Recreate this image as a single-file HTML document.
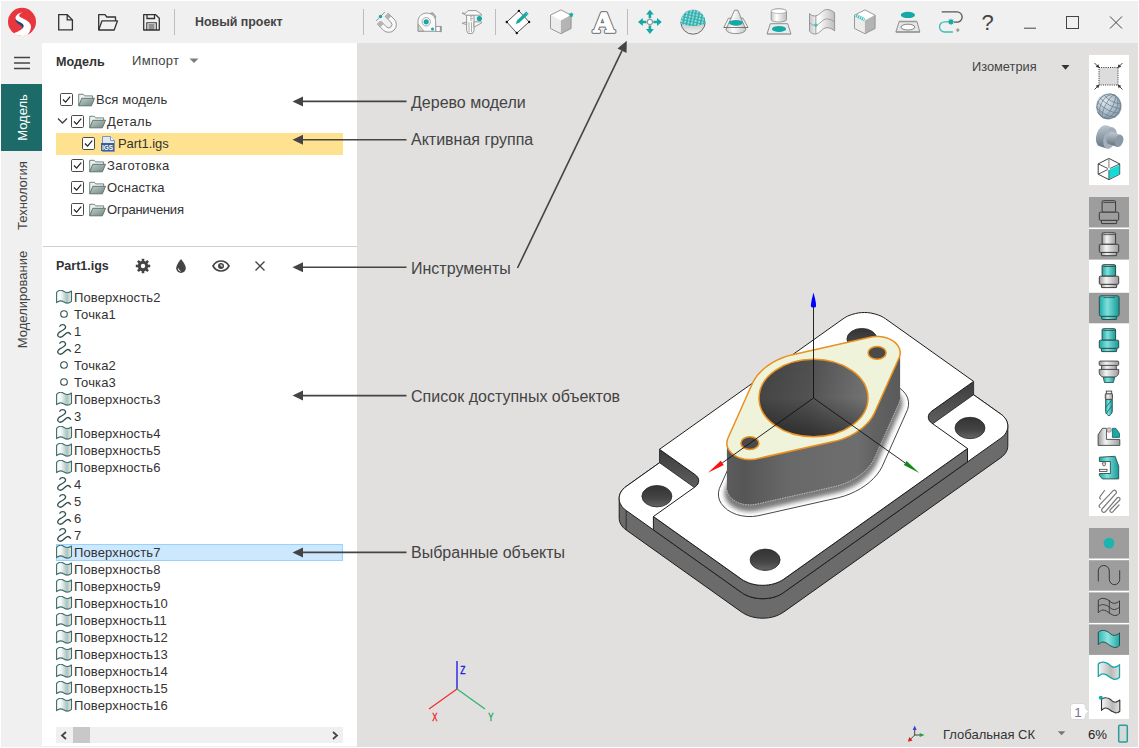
<!DOCTYPE html>
<html lang="ru"><head><meta charset="utf-8"><title>Новый проект</title>
<style>
html,body{margin:0;padding:0}
body{width:1139px;height:748px;overflow:hidden;background:#f0f0f0;position:relative;font-family:"Liberation Sans",sans-serif;font-size:13px;color:#333}
.abs{position:absolute}
#frame{left:0;top:0;width:1137px;height:746px;border:1px solid #fff;z-index:50;pointer-events:none}
#titlebar{left:0;top:0;width:1139px;height:43px;background:#f0f0f0}
#leftstrip{left:0;top:43px;width:42px;height:705px;background:#f0f0f0}
#panel{left:42px;top:43px;width:315px;height:703px;background:#fff}
#viewport{left:357px;top:43px;width:782px;height:705px;background:#e1e0df}
.vtab{position:absolute;left:2px;width:41px;display:flex;align-items:center;justify-content:center}
.vtab span{display:block;transform:rotate(-90deg);white-space:nowrap;font-size:13px;color:#444}
.title{left:195px;top:14px;font-weight:bold;font-size:13px;color:#444}
.sep{position:absolute;top:8px;width:1px;height:26px;background:#c4c4c4}
.trow{position:absolute;left:56px;width:287px;height:22px}
.trow .t{position:absolute;top:3px;font-size:13px;color:#333;white-space:nowrap}
.cb{position:absolute;top:5px;width:10px;height:10px;border:1px solid #444;background:#fff}
.lrow{position:absolute;left:56px;width:287px;height:17px}
.lrow .t{position:absolute;left:18px;top:1px;font-size:13px;color:#333;white-space:nowrap;letter-spacing:0.13px}
.ann{position:absolute;font-size:16px;color:#444;white-space:nowrap}
</style></head><body>
<div id="titlebar" class="abs"></div>
<div id="leftstrip" class="abs"></div>
<div id="panel" class="abs"></div>
<div id="viewport" class="abs"></div>
<!--TITLE-->
<svg class="abs" style="left:0;top:0" width="1139" height="43" viewBox="0 0 1139 43" font-family="Liberation Sans, sans-serif">
<defs>
<linearGradient id="gv" x1="0" y1="0" x2="1" y2="0"><stop offset="0" stop-color="#c8c8c8"/><stop offset="0.35" stop-color="#fff"/><stop offset="1" stop-color="#bdbdbd"/></linearGradient>
<linearGradient id="gh" x1="0" y1="0" x2="0" y2="1"><stop offset="0" stop-color="#bbb"/><stop offset="0.55" stop-color="#c8c8c8"/><stop offset="1" stop-color="#f2f2f2"/></linearGradient>
<pattern id="mesh" width="3.400" height="3" patternUnits="userSpaceOnUse" patternTransform="rotate(12)"><rect width="3.400" height="3" fill="#2bb0ad"/><path d="M0.300 2.600L1.500 0.500L2.700 2.600z" fill="#dff6f5"/></pattern>
</defs>
<g transform="translate(8,7.800)"><circle cx="14" cy="14" r="14" fill="#e8363f"/><path d="M15.100 4.400C12.500 4.600 7.500 6.500 7.500 10.300c0.300 3 4 4.200 6 5.400 1.500 1 2.200 1.800 1.800 3.300-0.200 0.800-0.600 1.500-1 2C11.500 23.200 8.500 24.500 5.500 25.400A14.900 14.900 0 0 0 19.300 27.300C21.500 24.500 23.600 21 22.800 17.700 22 14.500 18.500 12.600 15.900 11.300 13.500 10.100 11 9 11.100 7.800 11.200 6.200 13.500 4.900 15.100 4.400z" fill="#fff"/><path d="M7.300 11c0 3.200 2.500 4.800 5 6.200 1.500 0.900 2.300 2 2 3.800 0.700-0.800 1.200-1.700 1.300-2.700 0.200-1.700-1.300-2.700-3-3.600C10.500 13.600 8 12.800 7.300 11z" fill="#0b4f86"/></g>
<path d="M58.700 14.700h8.500l5.200 5.200v10h-13.700z" fill="none" stroke="#333" stroke-width="1.300" stroke-linejoin="miter"/><path d="M67.200 14.700v5.200h5.200" fill="none" stroke="#333" stroke-width="1.300"/>
<path d="M98.700 30V14.700h6.300l1.800 2.300h8.700v3.800" fill="none" stroke="#333" stroke-width="1.300" stroke-linejoin="round"/><path d="M98.700 30l3.300-9.200h15.500l-3.300 9.200z" fill="none" stroke="#333" stroke-width="1.300" stroke-linejoin="round"/>
<path d="M143.700 14.700h12l3.600 3.600v11.700h-15.600z" fill="none" stroke="#333" stroke-width="1.300" stroke-linejoin="round"/><path d="M147 14.700v3.800h7.500v-3.800" fill="none" stroke="#333" stroke-width="1.300"/><path d="M146.800 30v-7.300h9.500v7.300M148.500 25h6M148.500 27h6M148.500 29h6" fill="none" stroke="#333" stroke-width="1.100"/>
<rect x="174.0" y="9" width="1" height="26" fill="#bdbdbd"/>
<rect x="363.0" y="9" width="1" height="26" fill="#bdbdbd"/>
<rect x="495.0" y="9" width="1" height="26" fill="#bdbdbd"/>
<rect x="627.0" y="9" width="1" height="26" fill="#bdbdbd"/>
<text x="195" y="26" font-size="12.400" font-weight="bold" fill="#444">Новый проект</text>
<g transform="translate(388.500,24.400) rotate(-45)"><path d="M-7.700-8V0.300a7.700 7.700 0 0 0 15.400 0V-8H3.200V0.300a3.200 3.200 0 0 1-6.400 0V-8z" fill="#f8f8f8" stroke="#8f8f8f" stroke-width="0.900"/><rect x="-7.700" y="-8" width="4.500" height="4.200" fill="#b4b4b4"/><rect x="3.200" y="-8" width="4.500" height="4.200" fill="#b4b4b4"/></g>
<path d="M376 20.900L384.900 12" stroke="#777" stroke-width="0.800"/><circle cx="380.500" cy="16.500" r="1.700" fill="#14a9a6"/>
<path d="M435.700 26.400h5.500v5h-5.500z" fill="#fff" stroke="#8f8f8f" stroke-width="0.900"/><rect x="439.800" y="26" width="1.700" height="6.200" fill="#999"/>
<path d="M430.500 13.200l2.200-0.600 3 3.600-0.300 2.200z" fill="#b4b4b4" stroke="#8f8f8f" stroke-width="0.800"/>
<path d="M418 31.300V21.500c0-5 4-8.400 8.500-8.400 5.500 0 9.200 3.500 9.200 8.400v9.800z" fill="#f9f9f9" stroke="#8f8f8f" stroke-width="0.900" stroke-linejoin="round"/>
<path d="M418.300 24.300l5.500 6.800h-5.500z" fill="#d8d8d8" stroke="#8f8f8f" stroke-width="0.700"/>
<circle cx="426.200" cy="21.800" r="4.200" fill="#fff" stroke="#8f8f8f" stroke-width="0.800"/><circle cx="426.200" cy="21.800" r="2.600" fill="#14a9a6"/><circle cx="432.500" cy="29" r="1.500" fill="#14a9a6"/>
<path d="M466.600 15V30.600L468 33.400H472.600L474 30.600V15z" fill="#f9f9f9" stroke="#8f8f8f" stroke-width="0.900" stroke-linejoin="round"/>
<path d="M462 12.900L465.500 13.400L468 10.600H476.100L481.300 14.100L481.700 15.200H465.800z" fill="#fafafa" stroke="#8f8f8f" stroke-width="0.900" stroke-linejoin="round"/>
<path d="M462 23.300L466.600 21.800V24.600z" fill="#e4e4e4" stroke="#8f8f8f" stroke-width="0.800" stroke-linejoin="round"/>
<path d="M474 21.800H481.300L481.700 22.900L475.400 26.400L474 27.200z" fill="#f4f4f4" stroke="#8f8f8f" stroke-width="0.900" stroke-linejoin="round"/>
<path d="M469 22.200V32M471.500 22.200V32M470 16.700h2.200M470 18.400h3M470 20.100h2.200" fill="none" stroke="#8f8f8f" stroke-width="0.700"/>
<circle cx="479.400" cy="18.500" r="2.600" fill="#14a9a6"/>
<path d="M518.900 10.900L529.100 22 516.800 33 506.800 22z" fill="#fff" stroke="#444" stroke-width="0.900"/>
<circle cx="518.9" cy="10.9" r="1.200" fill="#111"/>
<circle cx="529.1" cy="22.0" r="1.200" fill="#111"/>
<circle cx="516.8" cy="33.0" r="1.200" fill="#111"/>
<circle cx="506.8" cy="22.0" r="1.200" fill="#111"/>
<path d="M526.300 11.600l2.300 2.400-9.300 8.700-3.600 1.400 1.300-3.700z" fill="#14a9a6"/><path d="M525.400 12.500l2.300 2.400" stroke="#7fd6d3" stroke-width="0.700"/>
<path d="M560.9 9.9L571.1 15.1L560.9 20.5L550.5 15.1z" fill="#fff"/><path d="M550.5 15.1L560.9 20.5L560.9 33.7L550.5 28.5z" fill="#ececec"/><path d="M571.1 15.1L560.9 20.5L560.9 33.7L571.1 28.5z" fill="#b4b4b4"/><path d="M560.9 9.9L571.1 15.1L571.1 28.5L560.9 33.7L550.5 28.5L550.5 15.1z" fill="none" stroke="#8f8f8f" stroke-width="0.900" stroke-linejoin="round"/>
<path d="M571.20 12.10L571.77 13.43L573.11 12.89L572.57 14.23L573.90 14.80L572.57 15.37L573.11 16.71L571.77 16.17L571.20 17.50L570.63 16.17L569.29 16.71L569.83 15.37L568.50 14.80L569.83 14.23L569.29 12.89L570.63 13.43z" fill="#14a9a6"/>
<g font-family="Liberation Serif, serif" font-weight="bold" font-size="30" text-anchor="middle" stroke-linejoin="round"><text x="603.900" y="32" fill="#666" stroke="#666" stroke-width="3.600">A</text><text x="603.900" y="32" fill="#fff" stroke="#fff" stroke-width="1.700">A</text></g>
<g fill="#14a9a6"><path d="M649.9 9.700l3.900 4.800h-2.600v3.700h-2.600v-3.700h-2.600z"/><path d="M649.9 33.900l3.900-4.800h-2.600v-3.700h-2.600v3.700h-2.600z"/><path d="M638 22.0l4.800-3.900v2.600h3.700v2.600h-3.700v2.600z"/><path d="M661.800 22.0l-4.800-3.900v2.600h-3.700v2.600h3.700v2.600z"/></g>
<circle cx="649.9" cy="22.0" r="2.600" fill="#fff" stroke="#999" stroke-width="1.100"/>
<circle cx="693" cy="21.800" r="12.200" fill="url(#gh)"/>
<path d="M680.800 22a12.200 12.200 0 0 0 24.400 0" fill="none" stroke="#5a5a5a" stroke-width="0.900"/>
<path d="M680.600 22.300a12.400 12.400 0 0 1 24.800 0C705.400 24.300 699.800 26 693 26S680.600 24.300 680.600 22.300z" fill="url(#mesh)"/>
<path d="M728.400 18.200h14.600l5 9.300h-24.200z" fill="#f4f4f4" stroke="#777" stroke-width="0.800"/>
<path d="M734.500 10.200h3.300l8 19.200c0 2.300-4.400 4.200-9.900 4.200s-9.900-1.900-9.900-4.200z" fill="url(#gv)" fill-opacity="0.850" stroke="#777" stroke-width="0.800" stroke-linejoin="round"/>
<path d="M723.800 27.500h24.200" stroke="#666" stroke-width="0.800"/>
<ellipse cx="735.900" cy="22.800" rx="7" ry="2.900" fill="#14a9a6"/>
<path d="M770.300 23.700h17.400l3.300 10.300h-24z" fill="#ececec" stroke="#777" stroke-width="0.800"/><path d="M767 34h24" stroke="#aaa" stroke-width="1.300"/>
<ellipse cx="779" cy="28.900" rx="7.100" ry="3" fill="#14a9a6"/>
<path d="M771.200 11.200c0-1.300 3.400-2.300 7.650-2.300s7.650 1 7.650 2.300v8.500c0 1.300-3.400 2.300-7.650 2.300s-7.650-1-7.650-2.300z" fill="url(#gv)" stroke="#888" stroke-width="0.800"/><ellipse cx="778.850" cy="11.200" rx="7.650" ry="2.300" fill="#fff" stroke="#999" stroke-width="0.600"/>
<path d="M809.500 13.500c2.500 2.500 4.300 2.600 6.300 2.300 4-0.600 6.800-6.300 11.100-6.300 3.200 0 5.700 1.500 7.700 3.200v18.200c-2-1.700-4.500-3.200-7.700-3.200-4.300 0-7.100 5.700-11.100 6.300-2 0.300-3.800-0.200-6.300-2.700z" fill="url(#gv)" stroke="#8f8f8f" stroke-width="0.900" stroke-linejoin="round"/>
<path d="M809.500 22.600c2.500 2.500 4.300 2.900 6.300 2.600 4-0.600 6.800-6.300 11.100-6.300 3.200 0 5.700 1.500 7.700 3.200M815.800 15.800v18.200" fill="none" stroke="#8f8f8f" stroke-width="0.800"/>
<path d="M815.800 23l2 2.200-2 2.200-2-2.200z" fill="#3cc4c0"/>
<path d="M864.9 9.9L875.1 15.1L864.9 20.5L854.5 15.1z" fill="#fff"/><path d="M854.5 15.1L864.9 20.5L864.9 33.7L854.5 28.5z" fill="#ececec"/><path d="M875.1 15.1L864.9 20.5L864.9 33.7L875.1 28.5z" fill="#b4b4b4"/><path d="M864.9 9.9L875.1 15.1L875.1 28.5L864.9 33.7L854.5 28.5L854.5 15.1z" fill="none" stroke="#8f8f8f" stroke-width="0.900" stroke-linejoin="round"/>
<path d="M856 15.400l8.600 4.300" stroke="#3cc4c0" stroke-width="3.200" stroke-dasharray="1.400 0.800"/>
<ellipse cx="907.900" cy="14.900" rx="7.100" ry="3.200" fill="#14a9a6"/>
<path d="M899.200 21.500h17.800l2.800 10.500h-23.900z" fill="#e6e6e6" stroke="#777" stroke-width="0.800"/><path d="M895.900 32h23.900M899.200 21.500h17.800" stroke="#999" stroke-width="1.300"/>
<ellipse cx="907.900" cy="27.100" rx="6.900" ry="2.900" fill="#fbfbfb" stroke="#666" stroke-width="0.800"/>
<path d="M941.700 11.900h15.300a5.150 5.150 0 0 1 0 10.300h-3" fill="none" stroke="#555" stroke-width="1.300"/>
<path d="M951 21.800h-6.400a5.100 5.100 0 0 0 0 10.200h8.300" fill="none" stroke="#3cbcb8" stroke-width="1.300"/>
<path d="M951.00 18.20L951.76 19.97L953.55 19.25L952.83 21.04L954.60 21.80L952.83 22.56L953.55 24.35L951.76 23.63L951.00 25.40L950.24 23.63L948.45 24.35L949.17 22.56L947.40 21.80L949.17 21.04L948.45 19.25L950.24 19.97z" fill="#14a9a6"/>
<path d="M957.800 28l1.900 2.100-1.900 2.100-1.900-2.100z" fill="#999"/>
<text x="987.500" y="30" font-size="22" text-anchor="middle" fill="#444">?</text>
<path d="M1024 28.200h12" stroke="#444" stroke-width="1"/>
<rect x="1066.500" y="16.500" width="12" height="12" fill="none" stroke="#444" stroke-width="1"/>
<path d="M1110 16.500l12 12M1122 16.500l-12 12" stroke="#444" stroke-width="1"/>
</svg>
<svg class="abs" style="left:13px;top:56px" width="18" height="14" viewBox="0 0 18 14"><path d="M1 1.500h16M1 7h16M1 12.500h16" stroke="#444" stroke-width="1.600"/></svg>
<!--LEFTSTRIP-->
<div class="abs" style="left:1px;top:84px;width:41px;height:67px;background:#1d6b68"></div><div class="vtab" style="top:84px;height:67px"><span style="color:#fff">Модель</span></div>
<div class="vtab" style="top:150px;height:90px"><span>Технология</span></div>
<div class="vtab" style="top:244px;height:110px"><span>Моделирование</span></div>
<!--PANEL-->
<div class="abs" style="left:56px;top:55px;font-weight:bold;font-size:12.600px;color:#333">Модель</div>
<div class="abs" style="left:132px;top:53px;font-size:13px;letter-spacing:0.300px;color:#444">Импорт</div>
<svg class="abs" style="left:189px;top:58px" width="10" height="6" viewBox="0 0 10 6"><path d="M0.500 0.500h9L5 5z" fill="#7c7c7c"/></svg>
<div class="trow" style="top:89px"><svg class="abs" style="left:4px;top:4px" width="13" height="13" viewBox="0 0 13 13"><rect x="0.500" y="0.500" width="12" height="12" rx="1.200" fill="#fff" stroke="#4a4a4a"/><path d="M3 6.5l2.6 2.7L10.2 3.6" fill="none" stroke="#222" stroke-width="1.2"/></svg><svg class="abs" style="left:21px;top:3px" width="18" height="16" viewBox="0 0 18 16"><defs><linearGradient id="fg1" x1="0" y1="0" x2="1" y2="1"><stop offset="0" stop-color="#c3cecb"/><stop offset="1" stop-color="#708783"/></linearGradient></defs><path d="M1.7 13.8V2.300h4.600l1.300 1.600h8v2.400" fill="#eef2f1" stroke="#6f8582" stroke-width="1"/><path d="M1.700 13.800L4.800 6.300h12.700l-3.100 7.500z" fill="url(#fg1)" stroke="#5f7673" stroke-width="1" stroke-linejoin="round"/></svg><span class="t" style="left:40px;letter-spacing:0.09px">Вся модель</span></div>
<div class="trow" style="top:111px"><svg class="abs" style="left:1px;top:6px" width="11" height="9" viewBox="0 0 11 9"><path d="M1 1.5l4.5 4.5L10 1.5" fill="none" stroke="#444" stroke-width="1.4"/></svg><svg class="abs" style="left:15px;top:4px" width="13" height="13" viewBox="0 0 13 13"><rect x="0.500" y="0.500" width="12" height="12" rx="1.200" fill="#fff" stroke="#4a4a4a"/><path d="M3 6.5l2.6 2.7L10.2 3.6" fill="none" stroke="#222" stroke-width="1.2"/></svg><svg class="abs" style="left:32px;top:3px" width="18" height="16" viewBox="0 0 18 16"><defs><linearGradient id="fg2" x1="0" y1="0" x2="1" y2="1"><stop offset="0" stop-color="#c3cecb"/><stop offset="1" stop-color="#708783"/></linearGradient></defs><path d="M1.7 13.8V2.300h4.600l1.300 1.600h8v2.400" fill="#eef2f1" stroke="#6f8582" stroke-width="1"/><path d="M1.700 13.800L4.800 6.300h12.700l-3.100 7.500z" fill="url(#fg2)" stroke="#5f7673" stroke-width="1" stroke-linejoin="round"/></svg><span class="t" style="left:51px;letter-spacing:0.36px">Деталь</span></div>
<div class="trow" style="top:133px;background:#ffe28f"><svg class="abs" style="left:26px;top:4px" width="13" height="13" viewBox="0 0 13 13"><rect x="0.500" y="0.500" width="12" height="12" rx="1.200" fill="#fff" stroke="#4a4a4a"/><path d="M3 6.5l2.6 2.7L10.2 3.6" fill="none" stroke="#222" stroke-width="1.2"/></svg><svg class="abs" style="left:44px;top:2px" width="17" height="18" viewBox="0 0 17 18"><path d="M2.5 1.5h8l4 4v11h-12z" fill="#dfe8f3" stroke="#7f97b5"/><path d="M10.5 1.5v4h4" fill="#f5f8fc" stroke="#7f97b5"/><rect x="1" y="8" width="13" height="8" fill="#3d5f8f"/><text x="7.5" y="14.6" font-size="6.5" font-weight="bold" fill="#fff" text-anchor="middle" font-family="Liberation Sans, sans-serif">IGS</text></svg><span class="t" style="left:62px;letter-spacing:-0.08px">Part1.igs</span></div>
<div class="trow" style="top:155px"><svg class="abs" style="left:15px;top:4px" width="13" height="13" viewBox="0 0 13 13"><rect x="0.500" y="0.500" width="12" height="12" rx="1.200" fill="#fff" stroke="#4a4a4a"/><path d="M3 6.5l2.6 2.7L10.2 3.6" fill="none" stroke="#222" stroke-width="1.2"/></svg><svg class="abs" style="left:32px;top:3px" width="18" height="16" viewBox="0 0 18 16"><defs><linearGradient id="fg4" x1="0" y1="0" x2="1" y2="1"><stop offset="0" stop-color="#c3cecb"/><stop offset="1" stop-color="#708783"/></linearGradient></defs><path d="M1.7 13.8V2.300h4.600l1.300 1.600h8v2.400" fill="#eef2f1" stroke="#6f8582" stroke-width="1"/><path d="M1.700 13.800L4.800 6.300h12.700l-3.100 7.500z" fill="url(#fg4)" stroke="#5f7673" stroke-width="1" stroke-linejoin="round"/></svg><span class="t" style="left:51px;letter-spacing:0.34px">Заготовка</span></div>
<div class="trow" style="top:177px"><svg class="abs" style="left:15px;top:4px" width="13" height="13" viewBox="0 0 13 13"><rect x="0.500" y="0.500" width="12" height="12" rx="1.200" fill="#fff" stroke="#4a4a4a"/><path d="M3 6.5l2.6 2.7L10.2 3.6" fill="none" stroke="#222" stroke-width="1.2"/></svg><svg class="abs" style="left:32px;top:3px" width="18" height="16" viewBox="0 0 18 16"><defs><linearGradient id="fg5" x1="0" y1="0" x2="1" y2="1"><stop offset="0" stop-color="#c3cecb"/><stop offset="1" stop-color="#708783"/></linearGradient></defs><path d="M1.7 13.8V2.300h4.600l1.300 1.600h8v2.400" fill="#eef2f1" stroke="#6f8582" stroke-width="1"/><path d="M1.700 13.800L4.800 6.300h12.700l-3.100 7.500z" fill="url(#fg5)" stroke="#5f7673" stroke-width="1" stroke-linejoin="round"/></svg><span class="t" style="left:51px;letter-spacing:0.12px">Оснастка</span></div>
<div class="trow" style="top:199px"><svg class="abs" style="left:15px;top:4px" width="13" height="13" viewBox="0 0 13 13"><rect x="0.500" y="0.500" width="12" height="12" rx="1.200" fill="#fff" stroke="#4a4a4a"/><path d="M3 6.5l2.6 2.7L10.2 3.6" fill="none" stroke="#222" stroke-width="1.2"/></svg><svg class="abs" style="left:32px;top:3px" width="18" height="16" viewBox="0 0 18 16"><defs><linearGradient id="fg6" x1="0" y1="0" x2="1" y2="1"><stop offset="0" stop-color="#c3cecb"/><stop offset="1" stop-color="#708783"/></linearGradient></defs><path d="M1.7 13.8V2.300h4.600l1.300 1.600h8v2.400" fill="#eef2f1" stroke="#6f8582" stroke-width="1"/><path d="M1.700 13.800L4.800 6.300h12.700l-3.100 7.500z" fill="url(#fg6)" stroke="#5f7673" stroke-width="1" stroke-linejoin="round"/></svg><span class="t" style="left:51px;letter-spacing:-0.23px">Ограничения</span></div>
<div class="abs" style="left:43px;top:246px;width:314px;height:1px;background:#d0d0d0"></div>
<div class="abs" style="left:56px;top:259px;font-weight:bold;font-size:12.500px;color:#333">Part1.igs</div>
<svg class="abs" style="left:135px;top:258px" width="16" height="16" viewBox="0 0 16 16"><g fill="#444"><circle cx="8" cy="8" r="5.2"/><g id="gt"><rect x="6.7" y="0.8" width="2.6" height="3" /><rect x="6.7" y="12.2" width="2.6" height="3"/></g><use href="#gt" transform="rotate(45 8 8)"/><use href="#gt" transform="rotate(90 8 8)"/><use href="#gt" transform="rotate(135 8 8)"/></g><circle cx="8" cy="8" r="2.2" fill="#fff"/></svg>
<svg class="abs" style="left:175px;top:258px" width="12" height="16" viewBox="0 0 12 16"><path d="M6 1C6 1 1.2 6.8 1.2 10.2a4.8 4.8 0 0 0 9.6 0C10.800 6.800 6 1 6 1z" fill="#444"/><path d="M3.300 10.5a2.800 2.800 0 0 0 2.200 2.700" fill="none" stroke="#fff" stroke-width="1"/></svg>
<svg class="abs" style="left:212px;top:260px" width="18" height="12" viewBox="0 0 18 12"><path d="M1 6C3 2.500 5.800 1 9 1s6 1.500 8 5c-2 3.500-4.800 5-8 5s-6-1.500-8-5z" fill="none" stroke="#444" stroke-width="1.700"/><circle cx="9" cy="6" r="3" fill="#444"/><path d="M9 4.300V6h1.700" stroke="#fff" stroke-width="1" fill="none"/></svg>
<svg class="abs" style="left:254px;top:260px" width="12" height="12" viewBox="0 0 12 12"><path d="M1.500 1.500l9 9M10.500 1.500l-9 9" stroke="#444" stroke-width="1.400"/></svg>
<div class="lrow" style="top:289px"><svg class="abs" style="left:0px;top:1px" width="17" height="15" viewBox="0 0 17 15"><defs><linearGradient id="sg0" x1="0" y1="0" x2="1" y2="0"><stop offset="0" stop-color="#fff"/><stop offset="0.3" stop-color="#f2f6f5"/><stop offset="0.7" stop-color="#a9c2bd"/><stop offset="1" stop-color="#eaf1ef"/></linearGradient></defs><path d="M0.600 2.300C2.500 0.300 5 -0.300 7.500 1.200s5 2.200 8-0.200v10.400C13 13.500 10.500 13.600 8 12S3 10.300 0.600 12.600z" fill="url(#sg0)" stroke="#3d6e69" stroke-width="1.100" stroke-linejoin="round"/></svg><span class="t">Поверхность2</span></div>
<div class="lrow" style="top:306px"><svg class="abs" style="left:3px;top:3px" width="10" height="10" viewBox="0 0 10 10"><circle cx="5" cy="5" r="3.300" fill="#fff" stroke="#2f4f4c" stroke-width="1.100"/></svg><span class="t">Точка1</span></div>
<div class="lrow" style="top:323px"><svg class="abs" style="left:0px;top:1px" width="17" height="15" viewBox="0 0 17 15"><path d="M3.800 2.200C4.800 0.300 8.600 0 9.500 2.500c0.800 2.400-2.300 3.600-4.800 4.900C2.300 8.700 0.800 10.800 2.400 12.400c1.700 1.600 4.300 0.200 6-1.600C10.400 8.600 12.500 7.200 14.600 10.300" fill="none" stroke="#2f4f4c" stroke-width="1.300" stroke-linecap="round"/></svg><span class="t">1</span></div>
<div class="lrow" style="top:340px"><svg class="abs" style="left:0px;top:1px" width="17" height="15" viewBox="0 0 17 15"><path d="M3.800 2.200C4.800 0.300 8.600 0 9.500 2.500c0.800 2.400-2.300 3.600-4.800 4.900C2.300 8.700 0.800 10.800 2.400 12.400c1.700 1.600 4.300 0.200 6-1.600C10.400 8.600 12.500 7.200 14.600 10.300" fill="none" stroke="#2f4f4c" stroke-width="1.300" stroke-linecap="round"/></svg><span class="t">2</span></div>
<div class="lrow" style="top:357px"><svg class="abs" style="left:3px;top:3px" width="10" height="10" viewBox="0 0 10 10"><circle cx="5" cy="5" r="3.300" fill="#fff" stroke="#2f4f4c" stroke-width="1.100"/></svg><span class="t">Точка2</span></div>
<div class="lrow" style="top:374px"><svg class="abs" style="left:3px;top:3px" width="10" height="10" viewBox="0 0 10 10"><circle cx="5" cy="5" r="3.300" fill="#fff" stroke="#2f4f4c" stroke-width="1.100"/></svg><span class="t">Точка3</span></div>
<div class="lrow" style="top:391px"><svg class="abs" style="left:0px;top:1px" width="17" height="15" viewBox="0 0 17 15"><defs><linearGradient id="sg6" x1="0" y1="0" x2="1" y2="0"><stop offset="0" stop-color="#fff"/><stop offset="0.3" stop-color="#f2f6f5"/><stop offset="0.7" stop-color="#a9c2bd"/><stop offset="1" stop-color="#eaf1ef"/></linearGradient></defs><path d="M0.600 2.300C2.500 0.300 5 -0.300 7.500 1.200s5 2.200 8-0.200v10.400C13 13.500 10.500 13.600 8 12S3 10.300 0.600 12.600z" fill="url(#sg6)" stroke="#3d6e69" stroke-width="1.100" stroke-linejoin="round"/></svg><span class="t">Поверхность3</span></div>
<div class="lrow" style="top:408px"><svg class="abs" style="left:0px;top:1px" width="17" height="15" viewBox="0 0 17 15"><path d="M3.800 2.200C4.800 0.300 8.600 0 9.500 2.500c0.800 2.400-2.300 3.600-4.800 4.900C2.300 8.700 0.800 10.800 2.400 12.400c1.700 1.600 4.300 0.200 6-1.600C10.400 8.600 12.500 7.200 14.600 10.300" fill="none" stroke="#2f4f4c" stroke-width="1.300" stroke-linecap="round"/></svg><span class="t">3</span></div>
<div class="lrow" style="top:425px"><svg class="abs" style="left:0px;top:1px" width="17" height="15" viewBox="0 0 17 15"><defs><linearGradient id="sg8" x1="0" y1="0" x2="1" y2="0"><stop offset="0" stop-color="#fff"/><stop offset="0.3" stop-color="#f2f6f5"/><stop offset="0.7" stop-color="#a9c2bd"/><stop offset="1" stop-color="#eaf1ef"/></linearGradient></defs><path d="M0.600 2.300C2.500 0.300 5 -0.300 7.500 1.200s5 2.200 8-0.200v10.400C13 13.500 10.500 13.600 8 12S3 10.300 0.600 12.600z" fill="url(#sg8)" stroke="#3d6e69" stroke-width="1.100" stroke-linejoin="round"/></svg><span class="t">Поверхность4</span></div>
<div class="lrow" style="top:442px"><svg class="abs" style="left:0px;top:1px" width="17" height="15" viewBox="0 0 17 15"><defs><linearGradient id="sg9" x1="0" y1="0" x2="1" y2="0"><stop offset="0" stop-color="#fff"/><stop offset="0.3" stop-color="#f2f6f5"/><stop offset="0.7" stop-color="#a9c2bd"/><stop offset="1" stop-color="#eaf1ef"/></linearGradient></defs><path d="M0.600 2.300C2.500 0.300 5 -0.300 7.500 1.200s5 2.200 8-0.200v10.400C13 13.500 10.500 13.600 8 12S3 10.300 0.600 12.600z" fill="url(#sg9)" stroke="#3d6e69" stroke-width="1.100" stroke-linejoin="round"/></svg><span class="t">Поверхность5</span></div>
<div class="lrow" style="top:459px"><svg class="abs" style="left:0px;top:1px" width="17" height="15" viewBox="0 0 17 15"><defs><linearGradient id="sg10" x1="0" y1="0" x2="1" y2="0"><stop offset="0" stop-color="#fff"/><stop offset="0.3" stop-color="#f2f6f5"/><stop offset="0.7" stop-color="#a9c2bd"/><stop offset="1" stop-color="#eaf1ef"/></linearGradient></defs><path d="M0.600 2.300C2.500 0.300 5 -0.300 7.500 1.200s5 2.200 8-0.200v10.400C13 13.500 10.500 13.600 8 12S3 10.300 0.600 12.600z" fill="url(#sg10)" stroke="#3d6e69" stroke-width="1.100" stroke-linejoin="round"/></svg><span class="t">Поверхность6</span></div>
<div class="lrow" style="top:476px"><svg class="abs" style="left:0px;top:1px" width="17" height="15" viewBox="0 0 17 15"><path d="M3.800 2.200C4.800 0.300 8.600 0 9.500 2.500c0.800 2.400-2.300 3.600-4.800 4.900C2.300 8.700 0.800 10.800 2.400 12.400c1.700 1.600 4.300 0.200 6-1.600C10.400 8.600 12.500 7.200 14.600 10.300" fill="none" stroke="#2f4f4c" stroke-width="1.300" stroke-linecap="round"/></svg><span class="t">4</span></div>
<div class="lrow" style="top:493px"><svg class="abs" style="left:0px;top:1px" width="17" height="15" viewBox="0 0 17 15"><path d="M3.800 2.200C4.800 0.300 8.600 0 9.500 2.500c0.800 2.400-2.300 3.600-4.800 4.900C2.300 8.700 0.800 10.800 2.400 12.400c1.700 1.600 4.300 0.200 6-1.600C10.400 8.600 12.500 7.200 14.600 10.300" fill="none" stroke="#2f4f4c" stroke-width="1.300" stroke-linecap="round"/></svg><span class="t">5</span></div>
<div class="lrow" style="top:510px"><svg class="abs" style="left:0px;top:1px" width="17" height="15" viewBox="0 0 17 15"><path d="M3.800 2.200C4.800 0.300 8.600 0 9.500 2.500c0.800 2.400-2.300 3.600-4.800 4.900C2.300 8.700 0.800 10.800 2.400 12.400c1.700 1.600 4.300 0.200 6-1.600C10.400 8.600 12.500 7.200 14.600 10.300" fill="none" stroke="#2f4f4c" stroke-width="1.300" stroke-linecap="round"/></svg><span class="t">6</span></div>
<div class="lrow" style="top:527px"><svg class="abs" style="left:0px;top:1px" width="17" height="15" viewBox="0 0 17 15"><path d="M3.800 2.200C4.800 0.300 8.600 0 9.500 2.500c0.800 2.400-2.300 3.600-4.800 4.900C2.300 8.700 0.800 10.800 2.400 12.400c1.700 1.600 4.300 0.200 6-1.600C10.400 8.600 12.500 7.200 14.600 10.300" fill="none" stroke="#2f4f4c" stroke-width="1.300" stroke-linecap="round"/></svg><span class="t">7</span></div>
<div class="lrow" style="top:544px;background:#cce8ff;box-shadow:inset 0 0 0 1px #99d1ff"><svg class="abs" style="left:0px;top:1px" width="17" height="15" viewBox="0 0 17 15"><defs><linearGradient id="sg15" x1="0" y1="0" x2="1" y2="0"><stop offset="0" stop-color="#fff"/><stop offset="0.3" stop-color="#f2f6f5"/><stop offset="0.7" stop-color="#a9c2bd"/><stop offset="1" stop-color="#eaf1ef"/></linearGradient></defs><path d="M0.600 2.300C2.500 0.300 5 -0.300 7.500 1.200s5 2.200 8-0.200v10.400C13 13.500 10.500 13.600 8 12S3 10.300 0.600 12.600z" fill="url(#sg15)" stroke="#3d6e69" stroke-width="1.100" stroke-linejoin="round"/></svg><span class="t">Поверхность7</span></div>
<div class="lrow" style="top:561px"><svg class="abs" style="left:0px;top:1px" width="17" height="15" viewBox="0 0 17 15"><defs><linearGradient id="sg16" x1="0" y1="0" x2="1" y2="0"><stop offset="0" stop-color="#fff"/><stop offset="0.3" stop-color="#f2f6f5"/><stop offset="0.7" stop-color="#a9c2bd"/><stop offset="1" stop-color="#eaf1ef"/></linearGradient></defs><path d="M0.600 2.300C2.500 0.300 5 -0.300 7.500 1.200s5 2.200 8-0.200v10.400C13 13.500 10.500 13.600 8 12S3 10.300 0.600 12.600z" fill="url(#sg16)" stroke="#3d6e69" stroke-width="1.100" stroke-linejoin="round"/></svg><span class="t">Поверхность8</span></div>
<div class="lrow" style="top:578px"><svg class="abs" style="left:0px;top:1px" width="17" height="15" viewBox="0 0 17 15"><defs><linearGradient id="sg17" x1="0" y1="0" x2="1" y2="0"><stop offset="0" stop-color="#fff"/><stop offset="0.3" stop-color="#f2f6f5"/><stop offset="0.7" stop-color="#a9c2bd"/><stop offset="1" stop-color="#eaf1ef"/></linearGradient></defs><path d="M0.600 2.300C2.500 0.300 5 -0.300 7.500 1.200s5 2.200 8-0.200v10.400C13 13.500 10.500 13.600 8 12S3 10.300 0.600 12.600z" fill="url(#sg17)" stroke="#3d6e69" stroke-width="1.100" stroke-linejoin="round"/></svg><span class="t">Поверхность9</span></div>
<div class="lrow" style="top:595px"><svg class="abs" style="left:0px;top:1px" width="17" height="15" viewBox="0 0 17 15"><defs><linearGradient id="sg18" x1="0" y1="0" x2="1" y2="0"><stop offset="0" stop-color="#fff"/><stop offset="0.3" stop-color="#f2f6f5"/><stop offset="0.7" stop-color="#a9c2bd"/><stop offset="1" stop-color="#eaf1ef"/></linearGradient></defs><path d="M0.600 2.300C2.500 0.300 5 -0.300 7.500 1.200s5 2.200 8-0.200v10.400C13 13.500 10.500 13.600 8 12S3 10.300 0.600 12.600z" fill="url(#sg18)" stroke="#3d6e69" stroke-width="1.100" stroke-linejoin="round"/></svg><span class="t">Поверхность10</span></div>
<div class="lrow" style="top:612px"><svg class="abs" style="left:0px;top:1px" width="17" height="15" viewBox="0 0 17 15"><defs><linearGradient id="sg19" x1="0" y1="0" x2="1" y2="0"><stop offset="0" stop-color="#fff"/><stop offset="0.3" stop-color="#f2f6f5"/><stop offset="0.7" stop-color="#a9c2bd"/><stop offset="1" stop-color="#eaf1ef"/></linearGradient></defs><path d="M0.600 2.300C2.500 0.300 5 -0.300 7.500 1.200s5 2.200 8-0.200v10.400C13 13.500 10.500 13.600 8 12S3 10.300 0.600 12.600z" fill="url(#sg19)" stroke="#3d6e69" stroke-width="1.100" stroke-linejoin="round"/></svg><span class="t">Поверхность11</span></div>
<div class="lrow" style="top:629px"><svg class="abs" style="left:0px;top:1px" width="17" height="15" viewBox="0 0 17 15"><defs><linearGradient id="sg20" x1="0" y1="0" x2="1" y2="0"><stop offset="0" stop-color="#fff"/><stop offset="0.3" stop-color="#f2f6f5"/><stop offset="0.7" stop-color="#a9c2bd"/><stop offset="1" stop-color="#eaf1ef"/></linearGradient></defs><path d="M0.600 2.300C2.500 0.300 5 -0.300 7.500 1.200s5 2.200 8-0.200v10.400C13 13.500 10.500 13.600 8 12S3 10.300 0.600 12.600z" fill="url(#sg20)" stroke="#3d6e69" stroke-width="1.100" stroke-linejoin="round"/></svg><span class="t">Поверхность12</span></div>
<div class="lrow" style="top:646px"><svg class="abs" style="left:0px;top:1px" width="17" height="15" viewBox="0 0 17 15"><defs><linearGradient id="sg21" x1="0" y1="0" x2="1" y2="0"><stop offset="0" stop-color="#fff"/><stop offset="0.3" stop-color="#f2f6f5"/><stop offset="0.7" stop-color="#a9c2bd"/><stop offset="1" stop-color="#eaf1ef"/></linearGradient></defs><path d="M0.600 2.300C2.500 0.300 5 -0.300 7.500 1.200s5 2.200 8-0.200v10.400C13 13.500 10.500 13.600 8 12S3 10.300 0.600 12.600z" fill="url(#sg21)" stroke="#3d6e69" stroke-width="1.100" stroke-linejoin="round"/></svg><span class="t">Поверхность13</span></div>
<div class="lrow" style="top:663px"><svg class="abs" style="left:0px;top:1px" width="17" height="15" viewBox="0 0 17 15"><defs><linearGradient id="sg22" x1="0" y1="0" x2="1" y2="0"><stop offset="0" stop-color="#fff"/><stop offset="0.3" stop-color="#f2f6f5"/><stop offset="0.7" stop-color="#a9c2bd"/><stop offset="1" stop-color="#eaf1ef"/></linearGradient></defs><path d="M0.600 2.300C2.500 0.300 5 -0.300 7.500 1.200s5 2.200 8-0.200v10.400C13 13.500 10.500 13.600 8 12S3 10.300 0.600 12.600z" fill="url(#sg22)" stroke="#3d6e69" stroke-width="1.100" stroke-linejoin="round"/></svg><span class="t">Поверхность14</span></div>
<div class="lrow" style="top:680px"><svg class="abs" style="left:0px;top:1px" width="17" height="15" viewBox="0 0 17 15"><defs><linearGradient id="sg23" x1="0" y1="0" x2="1" y2="0"><stop offset="0" stop-color="#fff"/><stop offset="0.3" stop-color="#f2f6f5"/><stop offset="0.7" stop-color="#a9c2bd"/><stop offset="1" stop-color="#eaf1ef"/></linearGradient></defs><path d="M0.600 2.300C2.500 0.300 5 -0.300 7.500 1.200s5 2.200 8-0.200v10.400C13 13.500 10.500 13.600 8 12S3 10.300 0.600 12.600z" fill="url(#sg23)" stroke="#3d6e69" stroke-width="1.100" stroke-linejoin="round"/></svg><span class="t">Поверхность15</span></div>
<div class="lrow" style="top:697px"><svg class="abs" style="left:0px;top:1px" width="17" height="15" viewBox="0 0 17 15"><defs><linearGradient id="sg24" x1="0" y1="0" x2="1" y2="0"><stop offset="0" stop-color="#fff"/><stop offset="0.3" stop-color="#f2f6f5"/><stop offset="0.7" stop-color="#a9c2bd"/><stop offset="1" stop-color="#eaf1ef"/></linearGradient></defs><path d="M0.600 2.300C2.500 0.300 5 -0.300 7.500 1.200s5 2.200 8-0.200v10.400C13 13.500 10.500 13.600 8 12S3 10.300 0.600 12.600z" fill="url(#sg24)" stroke="#3d6e69" stroke-width="1.100" stroke-linejoin="round"/></svg><span class="t">Поверхность16</span></div>
<div class="abs" style="left:56px;top:727px;width:287px;height:16px;background:#f0f0f0"></div>
<div class="abs" style="left:73px;top:727px;width:17px;height:16px;background:#c8c8c8"></div>
<svg class="abs" style="left:60px;top:731px" width="8" height="9" viewBox="0 0 8 9"><path d="M6 1L2 4.500 6 8" fill="none" stroke="#444" stroke-width="1.800"/></svg>
<svg class="abs" style="left:331px;top:731px" width="8" height="9" viewBox="0 0 8 9"><path d="M2 1l4 3.500L2 8" fill="none" stroke="#444" stroke-width="1.800"/></svg>
<!--VIEWPORT-->
<svg class="abs" style="left:0;top:0" width="1139" height="748" viewBox="0 0 1139 748">
<defs>
<linearGradient id="mhole" x1="0" y1="0" x2="0" y2="1"><stop offset="0" stop-color="#333"/><stop offset="0.6" stop-color="#454545"/><stop offset="1" stop-color="#666"/></linearGradient>
<linearGradient id="mwall" x1="0" y1="0" x2="1" y2="0"><stop offset="0" stop-color="#5c5c5c"/><stop offset="0.1" stop-color="#565656"/><stop offset="0.35" stop-color="#686868"/><stop offset="0.75" stop-color="#6e6e6e"/><stop offset="0.85" stop-color="#626262"/><stop offset="1" stop-color="#5a5a5a"/></linearGradient>
<linearGradient id="mbore" x1="0" y1="0" x2="1" y2="0"><stop offset="0" stop-color="#454545"/><stop offset="0.45" stop-color="#525252"/><stop offset="0.8" stop-color="#686868"/><stop offset="1" stop-color="#747474"/></linearGradient>
<linearGradient id="mbore2" x1="0" y1="0" x2="0" y2="1"><stop offset="0" stop-color="#000" stop-opacity="0.05"/><stop offset="0.5" stop-color="#000" stop-opacity="0"/><stop offset="1" stop-color="#000" stop-opacity="0.420"/></linearGradient>
<linearGradient id="mpw" x1="0" y1="0" x2="0" y2="1"><stop offset="0" stop-color="#3c3c3c"/><stop offset="1" stop-color="#6a6a6a"/></linearGradient>
<radialGradient id="mfil" cx="0.5" cy="0.5" r="0.5"><stop offset="0.75" stop-color="#8a8a8a"/><stop offset="0.93" stop-color="#e8e8e8"/><stop offset="1" stop-color="#fff"/></radialGradient>
<filter id="blur2" x="-10%" y="-10%" width="120%" height="120%"><feGaussianBlur stdDeviation="2.200"/></filter>
</defs>
<path d="M619.2 498.4L619.3 496.8L619.6 495.1L620.2 493.5L621.0 491.9L622.0 490.4L623.2 489.0L624.6 487.6L626.2 486.4L843.1 332.2L845.3 330.7L847.7 329.5L850.2 328.4L852.9 327.5L855.6 326.8L858.5 326.3L861.4 326.0L864.3 325.9L867.3 326.0L870.2 326.3L873.0 326.8L875.8 327.5L878.5 328.4L881.0 329.5L883.4 330.7L885.6 332.2L1000.8 414.1L1002.4 415.3L1003.8 416.7L1005.0 418.1L1006.0 419.6L1006.8 421.2L1007.4 422.8L1007.7 424.5L1007.8 426.2L1007.8 445.6L1007.7 447.3L1007.4 449.0L1006.8 450.6L1006.0 452.2L1005.0 453.7L1003.8 455.1L1002.4 456.5L1000.8 457.7L783.9 611.9L781.7 613.3L779.3 614.6L776.8 615.7L774.1 616.6L771.4 617.3L768.5 617.8L765.6 618.1L762.7 618.2L759.7 618.1L756.8 617.8L754.0 617.3L751.2 616.6L748.5 615.7L746.0 614.6L743.6 613.3L741.4 611.9L626.2 530.0L624.6 528.8L623.2 527.4L622.0 526.0L621.0 524.5L620.2 522.9L619.6 521.3L619.3 519.6L619.2 517.9z" fill="#6b6b6b" stroke="#1e1e1e" stroke-width="1" stroke-linejoin="round"/>
<path d="M626.2 510.5L626.2 530.0" stroke="#222" stroke-width="0.800"/>
<path d="M885.6 332.2L883.4 330.7L881.0 329.5L878.5 328.4L875.8 327.5L873.0 326.8L870.2 326.3L867.3 326.0L864.3 325.9L861.4 326.0L858.5 326.3L855.6 326.8L852.9 327.5L850.2 328.4L847.7 329.5L845.3 330.7L843.1 332.2L626.2 486.4L624.6 487.6L623.2 489.0L622.0 490.4L621.0 491.9L620.2 493.5L619.6 495.1L619.3 496.8L619.2 498.4L619.3 500.1L619.6 501.8L620.2 503.4L621.0 505.0L622.0 506.5L623.2 507.9L624.6 509.3L626.2 510.5L741.4 592.4L743.6 593.9L746.0 595.1L748.5 596.2L751.2 597.1L754.0 597.8L756.8 598.3L759.7 598.6L762.7 598.7L765.6 598.6L768.5 598.3L771.4 597.8L774.1 597.1L776.8 596.2L779.3 595.1L781.7 593.9L783.9 592.4L1000.8 438.2L1002.4 437.0L1003.8 435.6L1005.0 434.2L1006.0 432.7L1006.8 431.1L1007.4 429.5L1007.7 427.8L1007.8 426.2L1007.7 424.5L1007.4 422.8L1006.8 421.2L1006.0 419.6L1005.0 418.1L1003.8 416.7L1002.4 415.3L1000.8 414.1z" fill="#fff" stroke="#1e1e1e" stroke-width="1"/>
<path d="M653.4 516.5L741.4 579.1L743.6 580.5L746.0 581.7L748.5 582.8L751.2 583.7L754.0 584.4L756.8 584.9L759.7 585.2L762.7 585.3L765.6 585.2L768.5 584.9L771.4 584.4L774.1 583.7L776.8 582.8L779.3 581.7L781.7 580.5L783.9 579.1L967.5 448.5L967.5 461.9L783.9 592.4L781.7 593.9L779.3 595.1L776.8 596.2L774.1 597.1L771.4 597.8L768.5 598.3L765.6 598.6L762.7 598.7L759.7 598.6L756.8 598.3L754.0 597.8L751.2 597.1L748.5 596.2L746.0 595.1L743.6 593.9L741.4 592.4L653.4 529.9z" fill="#6b6b6b" stroke="#1e1e1e" stroke-width="1" stroke-linejoin="round"/>
<path d="M659.5 449.3L695.2 474.7L696.7 476.0L697.8 477.5L698.5 479.1L698.7 480.8L698.5 482.4L697.8 484.0L696.7 485.5L695.2 486.8L695.2 500.2L696.7 498.9L697.8 497.4L698.5 495.8L698.7 494.1L698.5 492.5L697.8 490.9L696.7 489.4L695.2 488.1L659.5 462.7z" fill="url(#mpw)" stroke="#1e1e1e" stroke-width="0.800" stroke-linejoin="round"/>
<path d="M931.8 423.1L930.3 421.9L929.2 420.4L928.5 418.8L928.3 417.1L928.5 415.4L929.2 413.8L930.3 412.4L931.8 411.1L973.6 381.4L973.6 394.7L931.8 424.4L930.3 425.7L929.2 427.2L928.5 428.8L928.3 430.5L928.5 432.1L929.2 433.7L930.3 435.2L931.8 436.5z" fill="url(#mpw)" stroke="#1e1e1e" stroke-width="0.800" stroke-linejoin="round"/>
<ellipse cx="656.9" cy="496.2" rx="15.0" ry="10.7" fill="url(#mhole)" stroke="#2a2a2a" stroke-width="0.800"/>
<ellipse cx="970.0" cy="428.0" rx="15.0" ry="10.7" fill="url(#mhole)" stroke="#2a2a2a" stroke-width="0.800"/>
<path d="M885.6 318.8L883.4 317.4L881.0 316.1L878.5 315.1L875.8 314.2L873.0 313.5L870.2 312.9L867.3 312.6L864.3 312.5L861.4 312.6L858.5 312.9L855.6 313.5L852.9 314.2L850.2 315.1L847.7 316.1L845.3 317.4L843.1 318.8L659.5 449.3L695.2 474.7L696.7 476.0L697.8 477.5L698.5 479.1L698.7 480.8L698.5 482.4L697.8 484.0L696.7 485.5L695.2 486.8L653.4 516.5L741.4 579.1L743.6 580.5L746.0 581.7L748.5 582.8L751.2 583.7L754.0 584.4L756.8 584.9L759.7 585.2L762.7 585.3L765.6 585.2L768.5 584.9L771.4 584.4L774.1 583.7L776.8 582.8L779.3 581.7L781.7 580.5L783.9 579.1L967.5 448.5L931.8 423.1L930.3 421.9L929.2 420.4L928.5 418.8L928.3 417.1L928.5 415.4L929.2 413.8L930.3 412.4L931.8 411.1L973.6 381.4z" fill="#fff" stroke="#1e1e1e" stroke-width="1" stroke-linejoin="round"/>
<ellipse cx="765.1" cy="559.8" rx="15.0" ry="10.7" fill="url(#mhole)" stroke="#2a2a2a" stroke-width="0.800"/>
<ellipse cx="861.9" cy="339.1" rx="15.0" ry="10.7" fill="url(#mhole)" stroke="#2a2a2a" stroke-width="0.800"/>
<path d="M899.4 387.9L895.2 385.3L890.5 383.4L885.3 382.1L879.9 381.4L874.4 381.4L869.0 382.1L788.5 400.2L782.6 401.9L777.0 404.0L771.6 406.4L766.6 409.2L761.9 412.2L757.6 415.6L753.7 419.2L750.3 423.0L747.3 427.0L744.9 431.2L719.4 488.4L718.5 492.2L718.5 496.1L719.4 500.0L721.3 503.6L724.1 507.0L727.6 510.0L731.8 512.5L736.5 514.5L741.7 515.8L747.1 516.5L752.6 516.5L758.0 515.8L838.5 497.7L844.4 496.0L850.0 493.9L855.4 491.4L860.4 488.7L865.1 485.6L869.4 482.3L873.3 478.7L876.7 474.9L879.7 470.9L882.1 466.7L907.6 409.5L908.5 405.6L908.5 401.7L907.6 397.9L905.7 394.2L902.9 390.8z" fill="#fff" stroke="#333" stroke-width="0.900"/>
<clipPath id="cfil"><path d="M899.4 387.9L895.2 385.3L890.5 383.4L885.3 382.1L879.9 381.4L874.4 381.4L869.0 382.1L788.5 400.2L782.6 401.9L777.0 404.0L771.6 406.4L766.6 409.2L761.9 412.2L757.6 415.6L753.7 419.2L750.3 423.0L747.3 427.0L744.9 431.2L719.4 488.4L718.5 492.2L718.5 496.1L719.4 500.0L721.3 503.6L724.1 507.0L727.6 510.0L731.8 512.5L736.5 514.5L741.7 515.8L747.1 516.5L752.6 516.5L758.0 515.8L838.5 497.7L844.4 496.0L850.0 493.9L855.4 491.4L860.4 488.7L865.1 485.6L869.4 482.3L873.3 478.7L876.7 474.9L879.7 470.9L882.1 466.7L907.6 409.5L908.5 405.6L908.5 401.7L907.6 397.9L905.7 394.2L902.9 390.8z"/></clipPath>
<g clip-path="url(#cfil)"><path d="M724.5 491.9L725.2 488.8L750.5 431.9L752.9 427.6L755.0 423.9L757.6 420.4L760.7 417.0L764.1 413.8L767.9 410.9L772.0 408.2L776.5 405.7L781.3 403.6L786.2 401.7L791.4 400.2L871.2 382.3L875.1 381.8L879.1 381.8L883.1 382.3L886.9 383.2L890.3 384.7L893.4 386.5L896.0 388.7L898.0 391.2L900.2 395.3L901.8 398.3L902.5 401.4L902.5 404.6L901.8 407.7L876.5 464.5L874.2 468.4L871.5 472.0L868.4 475.6L864.8 478.8L860.9 481.9L856.6 484.7L851.9 487.2L847.0 489.5L841.8 491.4L836.4 493.0L756.5 511.0L752.1 511.5L747.6 511.5L743.3 511.0L739.1 509.9L735.2 508.3L731.8 506.3L729.0 503.9L726.8 501.1L725.2 498.2L724.5 495.1z" fill="#7c7c7c" filter="url(#blur2)"/></g>
<path d="M726.9 441.8L727.6 439.0L752.9 382.3L755.0 378.6L757.6 375.1L760.7 371.7L764.1 368.5L767.9 365.6L772.0 362.9L776.5 360.4L781.3 358.3L786.2 356.4L791.4 354.9L871.2 337.0L875.1 336.5L879.1 336.5L883.1 337.0L886.9 337.9L890.3 339.4L893.4 341.2L896.0 343.4L898.0 345.8L899.4 348.5L900.1 351.3L900.1 399.5L899.4 402.3L874.1 459.0L872.0 462.7L869.4 466.2L866.3 469.6L862.9 472.8L859.1 475.7L855.0 478.4L850.5 480.9L845.7 483.0L840.8 484.9L835.6 486.4L755.8 504.3L751.9 504.8L747.9 504.8L743.9 504.3L740.1 503.4L736.7 501.9L733.6 500.1L731.0 497.9L729.0 495.5L727.6 492.8L726.9 490.0z" fill="url(#mwall)"/>
<path d="M726.9 490.0L727.6 492.8L729.0 495.5L731.0 497.9L733.6 500.1L736.7 501.9L740.1 503.4L743.9 504.3L747.9 504.8L751.9 504.8L755.8 504.3L835.6 486.4L840.8 484.9L845.7 483.0L850.5 480.9L855.0 478.4L859.1 475.7L862.9 472.8L866.3 469.6L869.4 466.2L872.0 462.7L874.1 459.0L899.4 402.3L900.1 399.5" fill="none" stroke="#dcdcdc" stroke-width="0.700" stroke-dasharray="1.500 1"/>
<path d="M893.4 341.2L890.3 339.4L886.9 337.9L883.1 337.0L879.1 336.5L875.1 336.5L871.2 337.0L791.4 354.9L786.2 356.4L781.3 358.3L776.5 360.4L772.0 362.9L767.9 365.6L764.1 368.5L760.7 371.7L757.6 375.1L755.0 378.6L752.9 382.3L727.6 439.0L726.9 441.8L726.9 444.7L727.6 447.5L729.0 450.2L731.0 452.6L733.6 454.8L736.7 456.6L740.1 458.1L743.9 459.0L747.9 459.5L751.9 459.5L755.8 459.0L835.6 441.1L840.8 439.6L845.7 437.7L850.5 435.6L855.0 433.1L859.1 430.4L862.9 427.5L866.3 424.3L869.4 420.9L872.0 417.4L874.1 413.7L899.4 357.0L900.1 354.2L900.1 351.3L899.4 348.5L898.0 345.8L896.0 343.4z" fill="#eef3d9" stroke="#ea9020" stroke-width="1.500"/>
<ellipse cx="813.5" cy="398.0" rx="54.500" ry="38.700" fill="url(#mbore)"/>
<ellipse cx="813.5" cy="398.0" rx="54.500" ry="38.700" fill="url(#mbore2)" stroke="#ea9020" stroke-width="1.500"/>
<ellipse cx="749.9" cy="443.2" rx="9" ry="6.400" fill="#4a4a4a" stroke="#ea9020" stroke-width="1.500"/>
<ellipse cx="877.1" cy="352.8" rx="9" ry="6.400" fill="#4a4a4a" stroke="#ea9020" stroke-width="1.500"/>
<path d="M813.5 398.0V307M813.5 398.0L722.3 462.9M813.5 398.0L905.2 463.0" stroke="#111" stroke-width="0.900" fill="none"/>
<path d="M813.500 292.500c1.300 5 2.600 10 2.600 13.500 0 2-5.200 2-5.200 0 0-3.500 1.300-8.500 2.600-13.500z" fill="#0000ff"/>
<path d="M708.0 472.8L720.8 460.8L723.8 465.0z" fill="#ff1010"/>
<path d="M919.3 473.0L903.8 465.0L906.6 461.0z" fill="#0f8a1a"/>
</svg>
<!--RIGHTBAR-->
<svg class="abs" style="left:0;top:0" width="1139" height="748" viewBox="0 0 1139 748" font-family="Liberation Sans, sans-serif">
<defs>
<linearGradient id="rgv" x1="0" y1="0" x2="1" y2="0"><stop offset="0" stop-color="#9a9a9a"/><stop offset="0.35" stop-color="#f4f4f4"/><stop offset="1" stop-color="#9c9c9c"/></linearGradient>
<linearGradient id="rtv" x1="0" y1="0" x2="1" y2="0"><stop offset="0" stop-color="#1aa9a5"/><stop offset="0.4" stop-color="#7fe0dc"/><stop offset="1" stop-color="#159a97"/></linearGradient>
<radialGradient id="glb" cx="0.35" cy="0.3" r="0.8"><stop offset="0" stop-color="#dfe9f0"/><stop offset="0.6" stop-color="#a9bac6"/><stop offset="1" stop-color="#7f919e"/></radialGradient>
<linearGradient id="cyl3" x1="0" y1="0" x2="0.3" y2="1"><stop offset="0" stop-color="#c5ced6"/><stop offset="0.5" stop-color="#9aa7b2"/><stop offset="1" stop-color="#6f7e8a"/></linearGradient>
<linearGradient id="flg" x1="0" y1="0" x2="1" y2="0"><stop offset="0" stop-color="#f6f6f6"/><stop offset="0.6" stop-color="#b9b9b9"/><stop offset="1" stop-color="#e2e2e2"/></linearGradient>
<linearGradient id="flt" x1="0" y1="0" x2="1" y2="0"><stop offset="0" stop-color="#2fb8b4"/><stop offset="0.45" stop-color="#8fe3df"/><stop offset="1" stop-color="#1fa9a5"/></linearGradient>
</defs>
<text x="972" y="70.700" font-size="12.800" fill="#444">Изометрия</text>
<path d="M1061.500 65h8l-4 4.700z" fill="#333"/>
<path d="M457 689V661" stroke="#5b5be0" stroke-width="2"/><path d="M457 689L429 709" stroke="#f03030" stroke-width="1.300"/><path d="M457 689L485 709" stroke="#2db56e" stroke-width="1.300"/>
<text x="460.300" y="674" font-size="10.500" fill="#1414e6" stroke="#1414e6" stroke-width="0.350" textLength="5.200" lengthAdjust="spacingAndGlyphs">Z</text><text x="432.300" y="721" font-size="10.500" fill="#f01818" stroke="#f01818" stroke-width="0.350" textLength="5.200" lengthAdjust="spacingAndGlyphs">X</text><text x="488.300" y="720.500" font-size="10.500" fill="#10a858" stroke="#10a858" stroke-width="0.350" textLength="5.200" lengthAdjust="spacingAndGlyphs">Y</text>
<rect x="1089" y="55" width="40" height="130" fill="#fff"/>
<rect x="1089" y="197" width="40" height="319" fill="#fff"/>
<rect x="1089" y="528" width="40" height="191" fill="#fff"/>
<rect x="1089" y="197.0" width="40" height="30.500" fill="#9d9d9d"/>
<rect x="1089" y="229.1" width="40" height="30.500" fill="#9d9d9d"/>
<rect x="1089" y="292.8" width="40" height="30.500" fill="#9d9d9d"/>
<rect x="1089" y="528.0" width="40" height="30.500" fill="#9d9d9d"/>
<rect x="1089" y="560.2" width="40" height="30.500" fill="#9d9d9d"/>
<rect x="1089" y="592.4" width="40" height="30.500" fill="#9d9d9d"/>
<rect x="1089" y="624.4" width="40" height="30.500" fill="#9d9d9d"/>
<rect x="1099" y="67.500" width="19" height="17.500" fill="#dcdcdc" stroke="#333" stroke-width="1" stroke-dasharray="1 1.200"/>
<path d="M1094.5 63.0L1099.0 67.5" stroke="#333" stroke-width="0.900"/>
<path d="M1099.5 68.0l-3.8 -1.2l2.6 -2.6z" fill="#333"/>
<path d="M1122.5 63.0L1118.0 67.5" stroke="#333" stroke-width="0.900"/>
<path d="M1117.5 68.0l3.8 -1.2l-2.6 -2.6z" fill="#333"/>
<path d="M1094.5 89.5L1099.0 85.0" stroke="#333" stroke-width="0.900"/>
<path d="M1099.5 84.5l-3.8 1.2l2.6 2.6z" fill="#333"/>
<path d="M1122.5 89.5L1118.0 85.0" stroke="#333" stroke-width="0.900"/>
<path d="M1117.5 84.5l3.8 1.2l-2.6 2.6z" fill="#333"/>
<circle cx="1108.800" cy="106.300" r="12.700" fill="url(#glb)"/>
<g fill="none" stroke="#6c7f8d" stroke-width="0.700"><ellipse cx="1108.800" cy="106.300" rx="3.5" ry="12.700" transform="rotate(28 1108.800 106.300)"/><ellipse cx="1108.800" cy="106.300" rx="8.0" ry="12.700" transform="rotate(28 1108.800 106.300)"/><ellipse cx="1108.800" cy="106.300" rx="11.5" ry="12.700" transform="rotate(28 1108.800 106.300)"/><path d="M1098.9 98.3q9.9 4.5 19.7 0" transform="rotate(28 1108.800 106.300)"/><path d="M1096.6 102.8q12.2 4.5 24.4 0" transform="rotate(28 1108.800 106.300)"/><path d="M1096.2 107.8q12.6 4.5 25.2 0" transform="rotate(28 1108.800 106.300)"/><path d="M1097.9 112.8q10.9 4.5 21.8 0" transform="rotate(28 1108.800 106.300)"/><path d="M1101.7 116.8q7.1 4.5 14.3 0" transform="rotate(28 1108.800 106.300)"/></g>
<g transform="rotate(18 1108 138)"><path d="M1102.500 126.500h7.500v22h-7.500a6.500 11 0 0 1 0-22z" fill="url(#cyl3)"/><ellipse cx="1110" cy="137.500" rx="6.300" ry="11" fill="#a3b0bb"/><path d="M1110.500 131h9v12.600h-9a4 6.300 0 0 1 0-12.600z" fill="url(#cyl3)"/><ellipse cx="1119.500" cy="137.300" rx="4" ry="6.300" fill="#8b99a6"/></g>
<path d="M1108.9 158.4L1119.7 163.9L1119.7 174.2L1108.9 179.6L1098.2 174.2L1098.2 163.9z" fill="#fff" stroke="#2a2a2a" stroke-width="0.900" stroke-linejoin="round"/>
<path d="M1109.2 169.8L1119.3 165.1L1119.3 174.0L1109.2 179.0z" fill="#10dcd8"/>
<path d="M1108.9 158.4V169.0" stroke="#999" stroke-width="1.300"/>
<path d="M1098.2 163.9L1108.9 169.0L1119.7 163.9M1098.2 174.2L1108.9 169.0L1108.9 179.6" fill="none" stroke="#2a2a2a" stroke-width="0.800"/>
<circle cx="1108.9" cy="169.0" r="1.200" fill="#fff"/>
<rect x="1101.400" y="220.0" width="15.300" height="3.600" rx="0.600" fill="#9d9d9d" stroke="#3a3a3a" stroke-width="1"/><rect x="1102.100" y="200.7" width="13.500" height="11.500" rx="1.200" fill="#9d9d9d" stroke="#3a3a3a" stroke-width="1"/><path d="M1103.300 202.5h11.500" stroke="#3a3a3a" stroke-width="0.800"/><rect x="1099.300" y="212.2" width="19.400" height="8.100" rx="1" fill="#9d9d9d" stroke="#3a3a3a" stroke-width="1"/>
<rect x="1101.400" y="252.1" width="15.300" height="3.600" rx="0.600" fill="url(#rgv)" stroke="#3c3c3c" stroke-width="1"/><rect x="1102.100" y="232.8" width="13.500" height="11.500" rx="1.200" fill="url(#rgv)" stroke="#3c3c3c" stroke-width="1"/><path d="M1103.300 234.6h11.500" stroke="#3c3c3c" stroke-width="0.800"/><rect x="1099.300" y="244.3" width="19.400" height="8.100" rx="1" fill="url(#rgv)" stroke="#3c3c3c" stroke-width="1"/>
<rect x="1101.400" y="284.0" width="15.300" height="3.600" rx="0.600" fill="url(#rgv)" stroke="#3c3c3c" stroke-width="1"/><rect x="1102.100" y="264.7" width="13.500" height="11.500" rx="1.200" fill="url(#rtv)" stroke="#3c3c3c" stroke-width="1"/><path d="M1103.300 266.5h11.500" stroke="#3c3c3c" stroke-width="0.800"/><rect x="1099.300" y="276.2" width="19.400" height="8.100" rx="1" fill="url(#rgv)" stroke="#3c3c3c" stroke-width="1"/>
<rect x="1101.700" y="316" width="14.900" height="3.500" rx="0.600" fill="url(#rtv)" stroke="#2f4f4e" stroke-width="1"/><rect x="1099.300" y="295.800" width="19.800" height="20.500" rx="1.800" fill="url(#rtv)" stroke="#2f4f4e" stroke-width="1"/><path d="M1103.500 297.600h11.500" stroke="#2f4f4e" stroke-width="0.800"/>
<rect x="1101.400" y="348.0" width="15.300" height="3.600" rx="0.600" fill="url(#rtv)" stroke="#2f4f4e" stroke-width="1"/><rect x="1102.100" y="328.7" width="13.500" height="11.500" rx="1.200" fill="url(#rtv)" stroke="#2f4f4e" stroke-width="1"/><path d="M1103.300 330.5h11.500" stroke="#2f4f4e" stroke-width="0.800"/><rect x="1099.300" y="340.2" width="19.400" height="8.100" rx="1" fill="url(#rtv)" stroke="#2f4f4e" stroke-width="1"/>
<path d="M1103.100 376.900h11.600l-1.300 5.600h-8.900z" fill="url(#rtv)" stroke="#2c5a58" stroke-width="0.900" stroke-linejoin="round"/>
<rect x="1101.600" y="365" width="14.700" height="4.800" fill="url(#rgv)" stroke="#444" stroke-width="0.900"/>
<rect x="1099.200" y="361.100" width="19.500" height="4.300" rx="0.800" fill="url(#rgv)" stroke="#444" stroke-width="0.900"/>
<path d="M1099.200 369.400h19.500v3.200c0 2-2 4.300-4 4.300h-11.600c-2 0-3.900-2.300-3.900-4.300z" fill="url(#rgv)" stroke="#444" stroke-width="0.900" stroke-linejoin="round"/>
<path d="M1105.600 399.300h6.700v12c0 2-1.800 3.600-3.350 4.600-1.550-1-3.350-2.600-3.350-4.600z" fill="url(#rtv)" stroke="#2c5a58" stroke-width="0.900" stroke-linejoin="round"/>
<path d="M1105.800 407.500l6.300-8M1105.800 414l6.300-8.500" stroke="#2c6a68" stroke-width="0.900" fill="none"/>
<rect x="1105.300" y="393.600" width="7.200" height="5.700" rx="0.800" fill="url(#rgv)" stroke="#444" stroke-width="0.900"/>
<rect x="1106.300" y="391.100" width="5.400" height="2.700" fill="#f2f2f2" stroke="#444" stroke-width="0.900"/>
<path d="M1098.100 445.400V434.700L1102.400 428.300H1106.400V439.400H1119.800V445.400z" fill="url(#rgv)" stroke="#444" stroke-width="0.900" stroke-linejoin="round"/>
<path d="M1112.400 428.300H1115.800L1119.500 433.400V437.400H1112.400z" fill="#17aaa6" stroke="#2c5a58" stroke-width="0.800" stroke-linejoin="round"/>
<circle cx="1109.100" cy="430" r="2.300" fill="#cfcfcf" stroke="#777" stroke-width="0.700"/>
<path d="M1099.400 457.200L1115.100 456.300L1118.700 466.200V478.900H1102.400L1099.400 475.500V473.500H1110.400V461.500H1099.400z" fill="url(#rtv)" stroke="#2c4e4d" stroke-width="0.900" stroke-linejoin="round"/>
<path d="M1102.200 462.800h3.700l-0.900 3h-1.900z" fill="#e8e8e8" stroke="#444" stroke-width="0.700"/><rect x="1099.400" y="469.300" width="7.600" height="2.200" fill="#f4f4f4" stroke="#444" stroke-width="0.800"/>
<path d="M1104.500 490.500L1100.200 496.300a1.800 1.800 0 0 0 0.300 2.700M1100 507.500a1.600 1.600 0 0 1-0.200-2.800L1113 490.800a2 2 0 0 1 3 2.600L1102.500 508.500M1105.300 511.800a1.800 1.800 0 0 1-2.800-3.300M1105.300 511.800L1117.500 497.500a1.800 1.800 0 0 1 2.300 2.500L1110 510a1.800 1.800 0 0 0 2.300 2.300L1119 505" fill="none" stroke="#7a7a7a" stroke-width="1.200" stroke-linecap="round" stroke-linejoin="round"/>
<circle cx="1109" cy="543.100" r="5.400" fill="#1ab5ae"/>
<path d="M1098.300 581.500V571a5.500 5.500 0 0 1 11 0V579.200a5.200 5.500 0 0 0 10.400 0V570.300" fill="none" stroke="#3a3a3a" stroke-width="1"/>
<path d="M1098.3 600.2C1098.7 600.0 1099.6 599.2 1100.4 598.9C1101.3 598.6 1102.1 598.2 1103.4 598.4C1104.6 598.5 1106.6 599.1 1107.9 599.8C1109.2 600.4 1110.0 601.7 1111.1 602.3C1112.2 602.9 1113.2 603.4 1114.3 603.4C1115.4 603.4 1116.6 602.7 1117.5 602.3C1118.4 601.9 1119.2 601.1 1119.5 600.9L1119.5 613.6C1119.1 613.8 1118.2 614.7 1117.4 615.0C1116.5 615.3 1115.5 615.7 1114.3 615.5C1113.1 615.3 1111.5 614.3 1110.2 613.6C1108.9 612.9 1107.7 611.7 1106.5 611.1C1105.3 610.5 1103.9 610.0 1102.9 610.0C1101.9 610.0 1101.2 610.5 1100.4 610.9C1099.7 611.3 1098.7 612.4 1098.3 612.7z" fill="none" stroke="#3a3a3a" stroke-width="1.0" stroke-linejoin="round"/>
<path d="M1098.3 606.4C1098.7 606.2 1099.6 605.4 1100.4 605.1C1101.3 604.8 1102.1 604.5 1103.4 604.6C1104.6 604.8 1106.6 605.4 1107.9 606.0C1109.2 606.6 1110.0 607.9 1111.1 608.5C1112.2 609.1 1113.2 609.6 1114.3 609.6C1115.4 609.6 1116.6 608.9 1117.5 608.5C1118.4 608.1 1119.2 607.3 1119.5 607.1" fill="none" stroke="#3a3a3a" stroke-width="0.900"/>
<path d="M1109.300 600V613.500" stroke="#3a3a3a" stroke-width="0.900"/>
<path d="M1098.3 632.2C1098.7 632.0 1099.6 631.2 1100.4 630.9C1101.3 630.6 1102.1 630.2 1103.4 630.4C1104.6 630.5 1106.6 631.1 1107.9 631.8C1109.2 632.4 1110.0 633.7 1111.1 634.3C1112.2 634.9 1113.2 635.4 1114.3 635.4C1115.4 635.4 1116.6 634.7 1117.5 634.3C1118.4 633.9 1119.2 633.1 1119.5 632.9L1119.5 645.6C1119.1 645.8 1118.2 646.7 1117.4 647.0C1116.5 647.3 1115.5 647.7 1114.3 647.5C1113.1 647.3 1111.5 646.3 1110.2 645.6C1108.9 644.9 1107.7 643.7 1106.5 643.1C1105.3 642.5 1103.9 642.0 1102.9 642.0C1101.9 642.0 1101.2 642.5 1100.4 642.9C1099.7 643.3 1098.7 644.4 1098.3 644.7z" fill="url(#flt)" stroke="#2c4e4d" stroke-width="1.0" stroke-linejoin="round"/>
<path d="M1098.3 664.0C1098.7 663.8 1099.6 663.0 1100.4 662.7C1101.3 662.4 1102.1 662.1 1103.4 662.2C1104.6 662.4 1106.6 663.0 1107.9 663.6C1109.2 664.2 1110.0 665.5 1111.1 666.1C1112.2 666.7 1113.2 667.2 1114.3 667.2C1115.4 667.2 1116.6 666.5 1117.5 666.1C1118.4 665.7 1119.2 664.9 1119.5 664.7L1119.5 677.4C1119.1 677.6 1118.2 678.5 1117.4 678.8C1116.5 679.1 1115.5 679.5 1114.3 679.3C1113.1 679.1 1111.5 678.1 1110.2 677.4C1108.9 676.7 1107.7 675.5 1106.5 674.9C1105.3 674.3 1103.9 673.8 1102.9 673.8C1101.9 673.8 1101.2 674.2 1100.4 674.7C1099.7 675.2 1098.7 676.2 1098.3 676.5z" fill="url(#flg)" stroke="#14a9a6" stroke-width="1.3" stroke-linejoin="round"/>
<path d="M1101.5 699.4C1101.8 699.2 1102.6 698.5 1103.3 698.2C1104.1 698.0 1104.8 697.6 1105.9 697.8C1107.0 697.9 1108.7 698.4 1109.8 699.0C1110.9 699.6 1111.6 700.7 1112.6 701.2C1113.5 701.7 1114.4 702.2 1115.3 702.2C1116.2 702.2 1117.3 701.6 1118.1 701.2C1118.8 700.8 1119.5 700.2 1119.8 700.0L1119.8 711.2C1119.5 711.4 1118.7 712.1 1118.0 712.4C1117.2 712.7 1116.4 713.0 1115.3 712.8C1114.3 712.6 1112.9 711.8 1111.7 711.2C1110.6 710.5 1109.6 709.5 1108.6 709.0C1107.5 708.4 1106.3 708.0 1105.5 708.0C1104.6 708.0 1104.0 708.4 1103.3 708.8C1102.7 709.2 1101.8 710.1 1101.5 710.4z" fill="url(#flg)" stroke="#333" stroke-width="1.1" stroke-linejoin="round"/>
<circle cx="1100.800" cy="697.800" r="2" fill="#14a9a6"/>
<path d="M1073.500 703.500h9a3 3 0 0 1 3 3v2l3 3-3 3v2a3 3 0 0 1-3 3h-9a3 3 0 0 1-3-3v-10a3 3 0 0 1 3-3z" fill="#fff" stroke="#d0d0d0" stroke-width="0.800"/><text x="1078" y="716.500" font-size="13.500" fill="#7d7396" text-anchor="middle">1</text>
<path d="M914.700 735V728.500M914.700 735h6.500M914.700 735l-4.600 4.600" stroke="#333" stroke-width="0.900"/><path d="M914.700 725.500l2 4.500h-4z" fill="#3c3ce0"/><path d="M924.500 735l-4.800 2v-4z" fill="#22a04a"/><path d="M908 741.700l1.200-4.600 3.300 3.300z" fill="#e01818"/>
<text x="943" y="738.900" font-size="13" fill="#333">Глобальная СК</text>
<path d="M1057.800 731.300h7.500l-3.750 3.900z" fill="#777"/>
<text x="1088" y="738.900" font-size="13.200" fill="#222">6%</text>
<rect x="1118.700" y="725.200" width="8.600" height="16.800" rx="1" fill="#d3dbda" stroke="#2a9d98" stroke-width="1.500"/>
</svg>
<!--OVERLAY-->
<svg class="abs" style="left:0;top:0;z-index:20;pointer-events:none" width="1139" height="748" viewBox="0 0 1139 748" font-family="Liberation Sans, sans-serif">
<path d="M406.500 101.4H300" stroke="#444" stroke-width="1.600"/><path d="M292.500 101.4l10.500-5v10z" fill="#444"/>
<text x="411" y="108.2" font-size="16" fill="#444">Дерево модели</text>
<path d="M406.500 139.8H300" stroke="#444" stroke-width="1.600"/><path d="M292.500 139.8l10.500-5v10z" fill="#444"/>
<text x="411" y="144.8" font-size="16" fill="#444">Активная группа</text>
<path d="M406.500 267.3H300" stroke="#444" stroke-width="1.600"/><path d="M292.500 267.3l10.500-5v10z" fill="#444"/>
<text x="411" y="273.6" font-size="16" fill="#444">Инструменты</text>
<path d="M406.500 395.6H300" stroke="#444" stroke-width="1.600"/><path d="M292.500 395.6l10.500-5v10z" fill="#444"/>
<text x="411" y="402.1" font-size="16" fill="#444">Список доступных объектов</text>
<path d="M406.500 552.4H300" stroke="#444" stroke-width="1.600"/><path d="M292.500 552.4l10.500-5v10z" fill="#444"/>
<text x="411" y="557.8" font-size="16" fill="#444">Выбранные объекты</text>
<path d="M517.5 268.0L622.0 50.7" stroke="#444" stroke-width="1.600"/>
<path d="M626.8 40.8L626.5 52.9L617.5 48.5z" fill="#444"/>
</svg>
<div id="frame" class="abs"></div>
</body></html>
